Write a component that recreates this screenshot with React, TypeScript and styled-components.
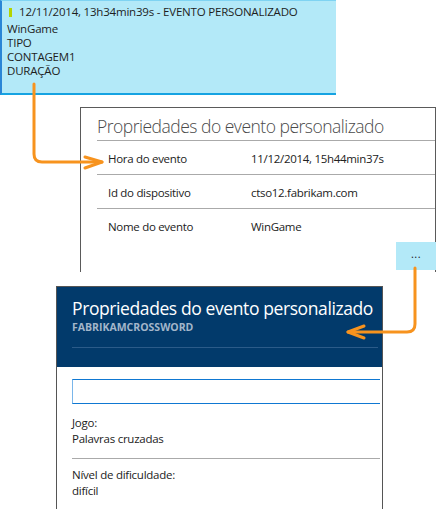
import styled, { createGlobalStyle } from 'styled-components';

const GlobalStyle = createGlobalStyle`
  html, body {
    margin: 0;
    padding: 0;
    background: #ffffff;
  }
  body {
    font-family: "Open Sans", "Noto Sans", "DejaVu Sans", sans-serif;
    color: #1e1e1e;
  }
`;

const Canvas = styled.div`
  position: relative;
  width: 436px;
  height: 509px;
  overflow: hidden;
  background: #fff;
`;

const EventCard = styled.div`
  box-sizing: border-box;
  width: 336px;
  height: 95px;
  background: #b3e9f8;
  border-top: 1px solid #7fd3f2;
  border-bottom: 2px solid #16a3e2;
  border-left: 2px solid #2a86d6;
  padding: 4px 0 0 5px;
  font-size: 11.5px;
  line-height: 14px;
  letter-spacing: -0.2px;
`;

const EventHeader = styled.div`
  display: flex;
  align-items: center;
  gap: 7px;
  margin: 0 0 3px 2px;
`;

const Marker = styled.span`
  width: 3px;
  height: 9px;
  background: #b4d400;
`;

const EventLine = styled.div``;

const PropsCard = styled.div`
  box-sizing: border-box;
  width: 356px;
  height: 165px;
  margin: 12px 0 0 80px;
  border: 1px solid #5a5a5a;
  border-bottom: none;
  display: flex;
  flex-direction: column;
`;

const PropsTitle = styled.div`
  padding: 7px 0 0 16px;
  height: 32px;
  box-sizing: border-box;
  font-size: 17.5px;
  line-height: 22px;
  letter-spacing: -0.5px;
  color: #4a4a4a;
  font-weight: 300;
  white-space: nowrap;
`;

const PropsRow = styled.div`
  display: grid;
  grid-template-columns: 143px 1fr;
  align-items: center;
  height: 34px;
  margin-left: 16px;
  padding: 2px 0 0 11px;
  box-sizing: border-box;
  border-top: 1px solid #aaa;
  font-size: 11.5px;
  letter-spacing: -0.3px;
  color: #222;

  &:last-of-type {
    border-bottom: 1px solid #aaa;
    height: 35px;
  }
`;

const MoreBar = styled.div`
  display: flex;
  justify-content: flex-end;
`;

const MoreButton = styled.div`
  width: 40px;
  height: 28px;
  margin-right: -1px;
  background: #b3e9f8;
  display: flex;
  align-items: center;
  justify-content: center;
  font-size: 11px;
  line-height: 1;
  padding-bottom: 6px;
  box-sizing: border-box;
  color: #222;
  letter-spacing: 0.5px;
`;

const Flyout = styled.div`
  box-sizing: border-box;
  width: 327px;
  height: 230px;
  margin: 14px 0 0 56px;
  border: 1px solid #555;
  border-bottom: none;
`;

const FlyoutHeader = styled.div`
  background: #023a6b;
  height: 80px;
  padding: 9px 4px 0 15px;
  box-sizing: border-box;
`;

const FlyoutTitle = styled.div`
  color: #ffffff;
  font-size: 17.5px;
  line-height: 24px;
  letter-spacing: -0.4px;
  white-space: nowrap;
`;

const FlyoutSub = styled.div`
  color: #a3b6ca;
  font-size: 10.5px;
  font-weight: 700;
  line-height: 12px;
  margin-top: 1px;
  padding-bottom: 14px;
  border-bottom: 1px solid #2b5b89;
`;

const FlyoutBody = styled.div`
  padding: 12px 2px 0 15px;
`;

const SearchInput = styled.div`
  height: 25px;
  box-sizing: border-box;
  border-top: 1px solid #0f78d2;
  border-bottom: 1px solid #0f78d2;
  border-left: 1px solid #7ab6ea;
  margin-bottom: 11px;
`;

const Field = styled.div`
  border-bottom: 1px solid #aaa;
  padding-bottom: 11px;
  margin-bottom: 8px;
  font-size: 11.5px;
  line-height: 16px;
  letter-spacing: -0.25px;
  color: #222;
`;

const Arrows = styled.svg`
  position: absolute;
  left: 0;
  top: 0;
  pointer-events: none;
`;

const ArrowPath = styled.path`
  fill: none;
  stroke: #f7931e;
  stroke-width: 3;
  stroke-linecap: round;
  stroke-linejoin: round;
`;

export default function App() {
  return (
    <>
      <GlobalStyle />
      <Canvas>
        <EventCard>
          <EventHeader>
            <Marker />
            <span>12/11/2014, 13h34min39s - EVENTO PERSONALIZADO</span>
          </EventHeader>
          <EventLine>WinGame</EventLine>
          <EventLine>TIPO</EventLine>
          <EventLine>CONTAGEM1</EventLine>
          <EventLine>DURAÇÃO</EventLine>
        </EventCard>

        <PropsCard>
          <PropsTitle>Propriedades do evento personalizado</PropsTitle>
          <PropsRow>
            <span>Hora do evento</span>
            <span>11/12/2014, 15h44min37s</span>
          </PropsRow>
          <PropsRow>
            <span>Id do dispositivo</span>
            <span>ctso12.fabrikam.com</span>
          </PropsRow>
          <PropsRow>
            <span>Nome do evento</span>
            <span>WinGame</span>
          </PropsRow>
          <MoreBar>
            <MoreButton>...</MoreButton>
          </MoreBar>
        </PropsCard>

        <Flyout>
          <FlyoutHeader>
            <FlyoutTitle>Propriedades do evento personalizado</FlyoutTitle>
            <FlyoutSub>FABRIKAMCROSSWORD</FlyoutSub>
          </FlyoutHeader>
          <FlyoutBody>
            <SearchInput />
            <Field>
              <div>Jogo:</div>
              <div>Palavras cruzadas</div>
            </Field>
            <Field>
              <div>Nível de dificuldade:</div>
              <div>difícil</div>
            </Field>
          </FlyoutBody>
        </Flyout>

        <Arrows width="436" height="509" viewBox="0 0 436 509">
          <ArrowPath d="M34 84 V154 Q34 162 42 162 H102" />
          <ArrowPath d="M85 157 L102 162 L85 168" />
          <ArrowPath d="M415 268 V324 Q415 332 407 332 H348" />
          <ArrowPath d="M364 326 L348 332 L364 338" />
        </Arrows>
      </Canvas>
    </>
  );
}
